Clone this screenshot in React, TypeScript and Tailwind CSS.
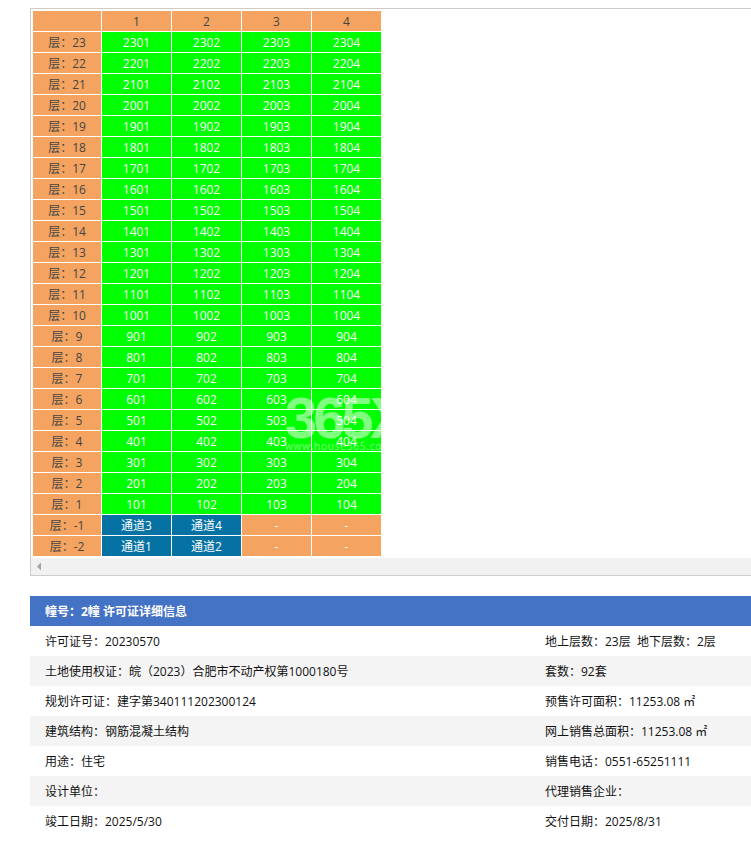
const font = { fontFamily: '"Open Sans", "Noto Sans CJK SC", sans-serif' };

function floors() {
  const rows: { label: string; cells: string[]; kind: "green" | "mixed" }[] = [];
  for (let f = 23; f >= 1; f--) {
    rows.push({
      label: `层：${f}`,
      cells: [1, 2, 3, 4].map((u) => `${f}0${u}`),
      kind: "green",
    });
  }
  rows.push({ label: "层：-1", cells: ["通道3", "通道4", "-", "-"], kind: "mixed" });
  rows.push({ label: "层：-2", cells: ["通道1", "通道2", "-", "-"], kind: "mixed" });
  return rows;
}

const details: [string, string][] = [
  ["许可证号：20230570", "地上层数：23层  地下层数：2层"],
  ["土地使用权证：皖（2023）合肥市不动产权第1000180号", "套数：92套"],
  ["规划许可证：建字第340111202300124", "预售许可面积：11253.08 ㎡"],
  ["建筑结构：钢筋混凝土结构", "网上销售总面积：11253.08 ㎡"],
  ["用途：住宅", "销售电话：0551-65251111"],
  ["设计单位：", "代理销售企业："],
  ["竣工日期：2025/5/30", "交付日期：2025/8/31"],
];

export default function App() {
  return (
    <div className="w-full h-[846px] overflow-hidden bg-white pt-2 pl-[30px] text-xs" style={font}>
      <div className="w-[800px] border border-[#cccccc]">
        <div className="relative pl-px pt-px">
          <table className="border-separate border-spacing-[1px] table-fixed w-[350px]">
            <colgroup>
              <col className="w-[68px]" />
              <col className="w-[69px]" />
              <col className="w-[69px]" />
              <col className="w-[69px]" />
              <col className="w-[69px]" />
            </colgroup>
            <tbody>
              <tr className="h-5">
                <td className="bg-[#f4a460] p-0"></td>
                {[1, 2, 3, 4].map((n) => (
                  <td key={n} className="bg-[#f4a460] p-0 pt-[2px] text-center leading-[18px] text-[#444444]">{n}</td>
                ))}
              </tr>
              {floors().map((r) => (
                <tr key={r.label} className="h-5">
                  <td className="bg-[#f4a460] p-0 pt-[2px] text-center leading-[18px] text-[#444444]">{r.label}</td>
                  {r.cells.map((c, i) => (
                    <td
                      key={i}
                      className={
                        r.kind === "green"
                          ? "bg-[#00ff00] p-0 pt-[2px] text-center leading-[18px] text-white"
                          : c === "-"
                            ? "bg-[#f4a460] p-0 pt-[2px] text-center leading-[18px] text-white"
                            : "bg-[#0572a3] p-0 pt-[2px] text-center leading-[18px] text-white"
                      }
                    >
                      {c}
                    </td>
                  ))}
                </tr>
              ))}
            </tbody>
          </table>
          <div className="absolute left-[254px] top-[387px] h-[62px] w-[96px] overflow-hidden pointer-events-none text-white/50">
            <div className="text-[58px] leading-[44px] font-bold tracking-[-4px] whitespace-nowrap" style={{ fontFamily: '"Liberation Sans", sans-serif' }}>365X</div>
            <div className="text-[10px] leading-3 tracking-[0.8px] whitespace-nowrap">www.house365.com</div>
          </div>
        </div>
        <div className="h-[17px] mt-px bg-[#f1f1f1] flex items-center pl-[5px]">
          <svg width="6" height="9" viewBox="0 0 6 9"><path d="M5 0.5 L1 4.5 L5 8.5 Z" fill="#a3a3a3" /></svg>
        </div>
      </div>
      <div className="mt-5">
        <div className="h-[30px] bg-[#4472c4] pl-[15px] leading-[32px] font-bold text-white">幢号：2幢 许可证详细信息</div>
        {details.map(([a, b], i) => (
          <div key={a} className={`h-[30px] flex leading-[32px] text-[#111111] whitespace-pre ${i % 2 === 1 ? "bg-[#f4f4f4]" : "bg-white"}`}>
            <div className="w-[500px] pl-[15px]">{a}</div>
            <div className="pl-[15px]">{b}</div>
          </div>
        ))}
      </div>
    </div>
  );
}
